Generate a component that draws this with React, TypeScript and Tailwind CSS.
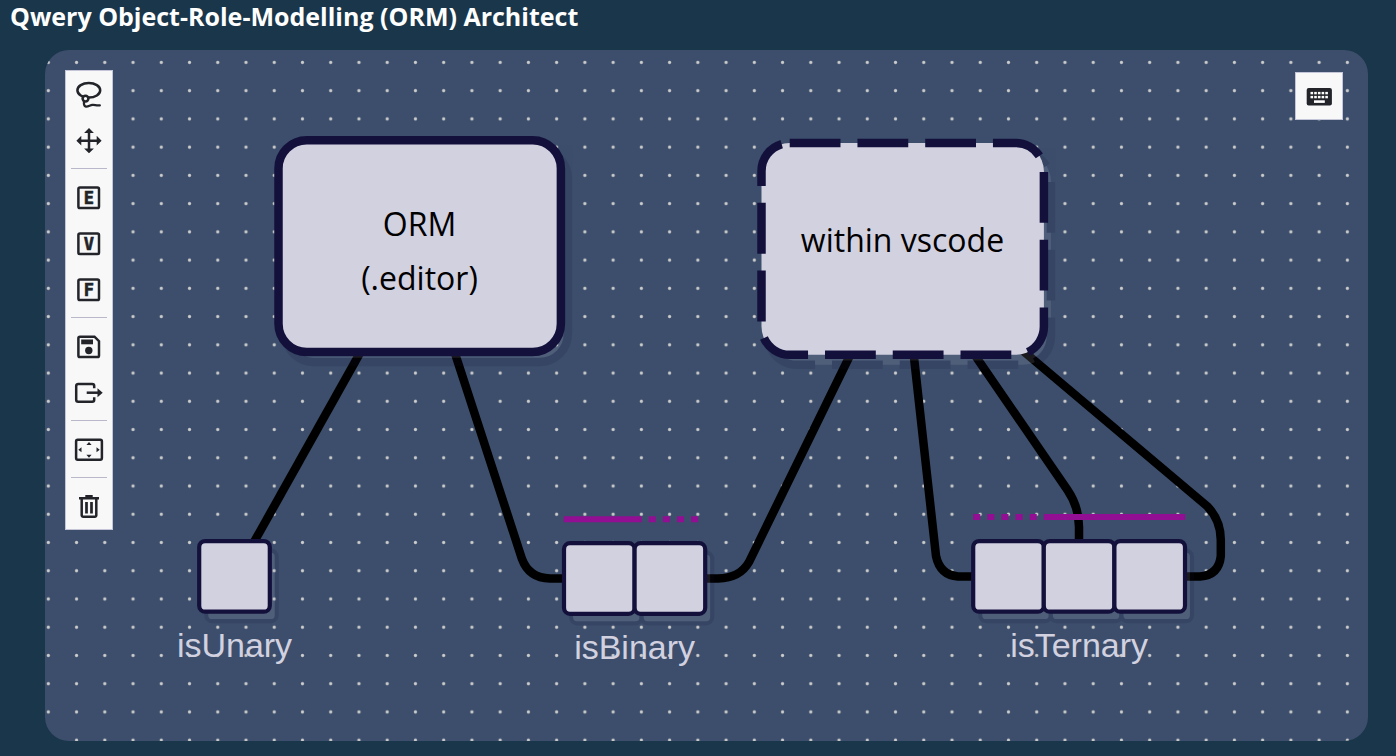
import type { ReactNode } from "react";

const INK = "#22242a";

function Glyph({ children }: { children: ReactNode }) {
  return (
    <svg
      width="30"
      height="30"
      viewBox="0 0 30 30"
      fill="none"
      stroke={INK}
      strokeWidth="2.5"
      aria-hidden="true"
    >
      {children}
    </svg>
  );
}

function LassoIcon() {
  return (
    <Glyph>
      <ellipse cx="14.8" cy="11.3" rx="11.4" ry="7.3" />
      <circle cx="11.5" cy="19.6" r="2.9" fill="#f8f8f8" />
      <path
        d="M10 22.3c-.2 2.2-.2 4.6 1.6 5.2 2.6.5 4.2-1.3 7-1.6 2.200-.2 4.2 1 7.2.4"
        strokeLinecap="round"
        strokeWidth="2.3"
      />
    </Glyph>
  );
}

function MoveIcon() {
  return (
    <Glyph>
      <path d="M15 7v17.4M6 15.7h18" />
      <path
        d="M15 3.1l4.9 4.9h-9.8zM15 28.3l4.900-4.9h-9.8zM2.4 15.7l4.9-4.9v9.8zM27.6 15.7l-4.9-4.9v9.8z"
        fill={INK}
        stroke="none"
      />
    </Glyph>
  );
}

function LetterIcon({ letter }: { letter: string }) {
  return (
    <Glyph>
      <rect x="4.4" y="5.4" width="20.6" height="20.6" rx="1.6" />
      <text
        x="14.8"
        y="22"
        textAnchor="middle"
        fill={INK}
        strokeWidth="0.6"
        className="font-['DejaVu_Sans_Mono',monospace] text-[17px] font-bold"
      >
        {letter}
      </text>
    </Glyph>
  );
}

function SaveIcon() {
  return (
    <Glyph>
      <path d="M6 5.700h14.500l4.500 4.500v14.200a1.600 1.600 0 0 1-1.600 1.600H6a1.600 1.600 0 0 1-1.600-1.600V7.300A1.600 1.600 0 0 1 6 5.700z" />
      <rect x="7.2" y="8.5" width="11.8" height="4.8" fill={INK} stroke="none" />
      <circle cx="14.8" cy="19.5" r="3.7" fill={INK} stroke="none" />
    </Glyph>
  );
}

function ExportIcon() {
  return (
    <Glyph>
      <path d="M20.200 11.200V8.900a2 2 0 0 0-2-2H4.200a2 2 0 0 0-2 2v13.800a2 2 0 0 0 2 2h14a2 2 0 0 0 2-2v-2.400" />
      <path d="M12.7 15.7h12" />
      <path d="M28.7 15.7l-5.2-4.5v9z" fill={INK} stroke="none" />
    </Glyph>
  );
}

function FitIcon() {
  return (
    <Glyph>
      <rect x="2.1" y="5.8" width="25.8" height="19.9" rx="1.6" />
      <path
        d="M15 8l2.600 3h-5.200zM15 23.700l2.600-3h-5.200zM4.300 15.700l3.200-2.500v5zM25.700 15.700l-3.200-2.500v5z"
        fill={INK}
        stroke="none"
      />
    </Glyph>
  );
}

function TrashIcon() {
  return (
    <Glyph>
      <path d="M5 7.2h20M11.3 5.2h7.400" />
      <path d="M7.7 8v16.200a1.500 1.500 0 0 0 1.500 1.500h11.600a1.500 1.500 0 0 0 1.500-1.500V8" />
      <path d="M12.5 11v11.5M17.5 11v11.5" strokeWidth="2.7" />
    </Glyph>
  );
}

function KeyboardIcon() {
  const columns = [6.5, 10.2, 13.9, 17.6, 21.3];
  return (
    <Glyph>
      <rect x="2.7" y="7" width="25.2" height="17.6" rx="2" fill={INK} stroke="none" />
      {[10.9, 14.9].map((y) =>
        columns.map((x) => (
          <rect key={`${x}-${y}`} x={x} y={y} width="2.6" height="2.4" fill="#fff" stroke="none" />
        )),
      )}
      <rect x="10" y="19.3" width="10.8" height="2.6" fill="#fff" stroke="none" />
    </Glyph>
  );
}

type Tool = { label: string; icon: ReactNode };

const toolGroups: Tool[][] = [
  [
    { label: "Lasso tool", icon: <LassoIcon /> },
    { label: "Move canvas", icon: <MoveIcon /> },
  ],
  [
    { label: "Create entity", icon: <LetterIcon letter="E" /> },
    { label: "Create value", icon: <LetterIcon letter="V" /> },
    { label: "Create fact", icon: <LetterIcon letter="F" /> },
  ],
  [
    { label: "Save", icon: <SaveIcon /> },
    { label: "Export", icon: <ExportIcon /> },
  ],
  [{ label: "Fit to view", icon: <FitIcon /> }],
  [{ label: "Clear", icon: <TrashIcon /> }],
];

function ToolButton({ label, icon }: Tool) {
  return (
    <button
      type="button"
      aria-label={label}
      className="flex size-[46px] cursor-pointer items-center justify-center hover:bg-gray-200"
    >
      {icon}
    </button>
  );
}

function Palette() {
  return (
    <div
      role="toolbar"
      aria-label="Modelling tools"
      className="absolute top-5 left-5 flex flex-col border border-[#c4c5d6] bg-[#f8f8f8]"
    >
      {toolGroups.map((group, index) => (
        <div key={group[0].label} className="flex flex-col">
          {index > 0 && <hr className="m-[5px] border-t border-[#b8b8ca]" />}
          {group.map((tool) => (
            <ToolButton key={tool.label} {...tool} />
          ))}
        </div>
      ))}
    </div>
  );
}

const ROLE = 70.6;

function ObjectBox({ x, y, dashed }: { x: number; y: number; dashed?: boolean }) {
  const box = (
    <rect
      x={x}
      y={y}
      width="282.4"
      height="211.8"
      rx="28.2"
      fill="#d2d1e0"
      stroke="#13113c"
      strokeWidth="8.5"
      strokeDasharray={dashed ? "50.8 16.95" : undefined}
    />
  );
  return (
    <>
      <g opacity="0.13" transform="translate(7 10)">
        {box}
      </g>
      {box}
    </>
  );
}

function FactType({ x, y, roles, label }: { x: number; y: number; roles: number; label: string }) {
  const boxes = Array.from({ length: roles }, (_, i) => (
    <rect
      key={i}
      x={x + i * ROLE}
      y={y}
      width={ROLE}
      height={ROLE}
      rx="6"
      fill="#d2d1e0"
      stroke="#13113c"
      strokeWidth="4.2"
    />
  ));
  return (
    <>
      <g opacity="0.13" transform="translate(7 9.500)">
        {boxes}
      </g>
      {boxes}
      <text
        x={x + (roles * ROLE) / 2}
        y={y + 116}
        textAnchor="middle"
        fill="#d2d1e0"
        className="font-['Liberation_Sans',Arial,sans-serif] text-[34px]"
      >
        {label}
      </text>
    </>
  );
}

function Diagram() {
  return (
    <svg className="absolute inset-0 size-full" role="img" aria-label="Object-role model">
      <defs>
        <pattern
          id="grid"
          x="-10.8"
          y="-1.7"
          width="28.24"
          height="28.24"
          patternUnits="userSpaceOnUse"
        >
          <circle cx="14.12" cy="14.12" r="1.6" fill="#cccccc" />
        </pattern>
      </defs>
      <rect width="100%" height="100%" fill="url(#grid)" />
      <g transform="translate(-45 -50)">
        <g fill="none" stroke="#000" strokeWidth="8.5">
          <path d="M420 246L235 576" />
          <path d="M420 246L522 559Q529 578 550 578.500H599" />
          <path d="M902 249L749 562Q740 578 718 578.500H670" />
          <path d="M902 249L936 556Q940 575 958 576.500H1009" />
          <path d="M902 249L1067.500 490Q1079 507 1079 527V576" />
          <path d="M902 249L1207 506Q1220.800 520 1220.800 540V556Q1219 575 1200 576.500H1150" />
        </g>

        <ObjectBox x={278.5} y={140.2} />
        <ObjectBox x={761.5} y={143} dashed />
        <g
          fill="#000"
          textAnchor="middle"
          className="font-['Open_Sans','Noto_Sans',sans-serif] text-[32px]"
        >
          <text x="419.5" y="236">ORM</text>
          <text x="419.5" y="290">(.editor)</text>
          <text x="902.5" y="252">within vscode</text>
        </g>

        <FactType x={199.2} y={541.1} roles={1} label="isUnary" />
        <FactType x={564} y={543.2} roles={2} label="isBinary" />
        <FactType x={973.2} y={541.1} roles={3} label="isTernary" />

        <g stroke="#920f94" strokeWidth="6">
          <path d="M563.700 519.200H635" />
          <path d="M634.600 519.200H705" strokeDasharray="7.06" />
          <path d="M973.200 517H1043" strokeDasharray="7.06" />
          <path d="M1043.800 517H1185.200" />
        </g>
      </g>
    </svg>
  );
}

export default function App() {
  return (
    <div className="flex min-h-screen flex-col bg-[#1a364a] pb-[15px]">
      <header className="h-[50px] px-2.5">
        <h1 className="font-['Open_Sans','Noto_Sans',sans-serif] text-[25px] leading-8 font-bold text-white">
          Qwery Object-Role-Modelling (ORM) Architect
        </h1>
      </header>
      <main className="relative mr-7 ml-[45px] flex-1 overflow-hidden rounded-3xl bg-[#3c4e6b]">
        <Diagram />
        <Palette />
        <div className="absolute top-[22px] right-[25px] border border-[#c4c5d6] bg-[#f8f8f8]">
          <ToolButton label="Keyboard shortcuts" icon={<KeyboardIcon />} />
        </div>
      </main>
    </div>
  );
}
